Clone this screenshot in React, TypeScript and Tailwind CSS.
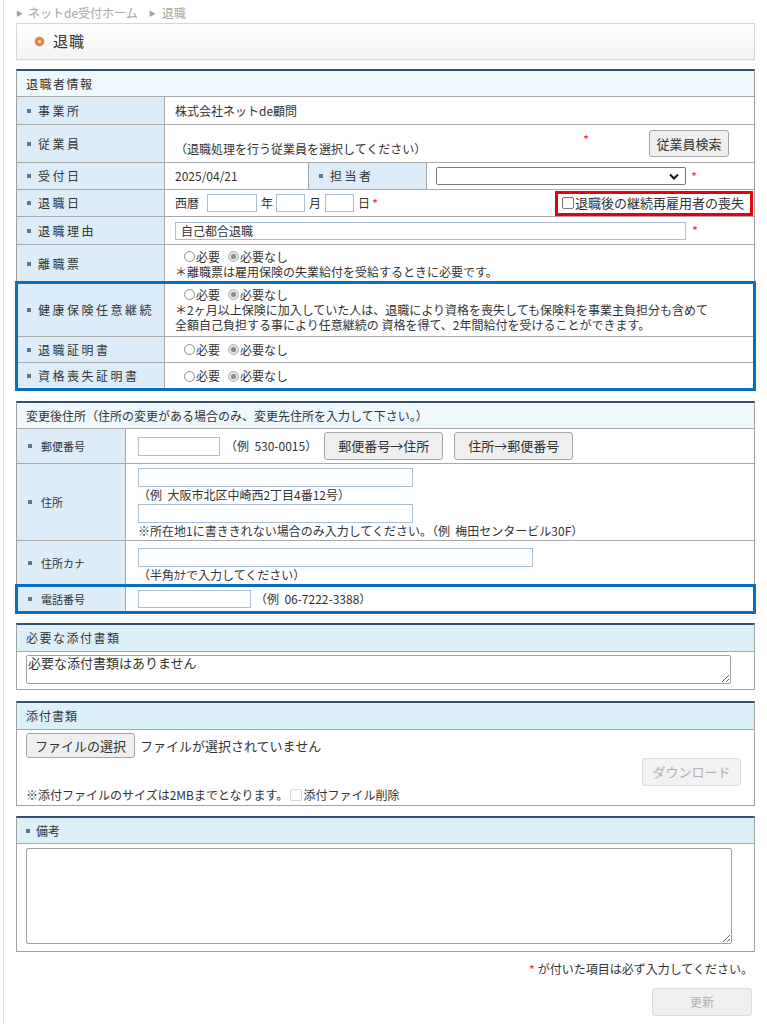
import React from "react";

const FONT = "font-['Noto_Sans_CJK_JP','Noto_Sans',sans-serif]";

function Bullet() {
  return <span className="inline-block w-[4px] h-[4px] shrink-0 bg-[#5f7489]" />;
}

function Req({ className = "" }: { className?: string }) {
  return <span className={`text-[#e8383d] text-[13px] leading-none ${className}`}>*</span>;
}

function Radio({ checked, label }: { checked?: boolean; label: string }) {
  return (
    <span className="inline-flex items-center">
      <span
        className={
          checked
            ? "w-[11px] h-[11px] rounded-full border border-[#b3b3b3] bg-[#e2e2e2] flex items-center justify-center"
            : "w-[11px] h-[11px] rounded-full border border-[#8c8c8c] bg-white"
        }
      >
        {checked && <span className="w-[5px] h-[5px] rounded-full bg-[#8a8a8a]" />}
      </span>
      <span className="ml-[1px]">{label}</span>
    </span>
  );
}

function RadioPair() {
  return (
    <div className="flex items-center gap-[8px] pl-[9px]">
      <Radio label="必要" />
      <Radio checked label="必要なし" />
    </div>
  );
}

function Box({ w, h = "h-[19px]", value }: { w: string; h?: string; value?: string }) {
  return (
    <input
      readOnly
      defaultValue={value}
      className={`${w} ${h} border border-[#a9bfd6] bg-white px-[5px] text-[12px] text-[#333] outline-none`}
    />
  );
}

function Btn({ children, className = "" }: { children: React.ReactNode; className?: string }) {
  return (
    <button
      type="button"
      className={`flex items-center justify-center rounded-[3px] border border-[#a6a6a6] bg-[#efefef] text-[13px] text-[#333] ${className}`}
    >
      {children}
    </button>
  );
}

function Check({ light }: { light?: boolean }) {
  return (
    <span
      className={
        light
          ? "inline-block w-[12px] h-[12px] rounded-[2px] border border-[#d6d6d6] bg-white"
          : "inline-block w-[12px] h-[12px] rounded-[2px] border border-[#767676] bg-white"
      }
    />
  );
}

function L1({ children, extra = "" }: { children: React.ReactNode; extra?: string }) {
  return (
    <div className={`flex items-center gap-[7px] pl-[10px] bg-[#dcedf9] border-r border-[#a8a8a8] text-[12px] tracking-[2.5px] ${extra}`}>
      <Bullet />
      <span>{children}</span>
    </div>
  );
}

function L2({ children }: { children: React.ReactNode }) {
  return (
    <div className="flex items-center gap-[9px] pl-[11px] bg-[#dcedf9] border-r border-[#a8a8a8] text-[11px]">
      <Bullet />
      <span>{children}</span>
    </div>
  );
}

function SectionHead({ children, tracking = "", tall }: { children: React.ReactNode; tracking?: string; tall?: boolean }) {
  return (
    <div
      className={`${tall ? "h-[27px]" : "h-[26px]"} flex items-center pl-[9px] border-b border-[#a8a8a8] text-[12px] ${tracking}`}
    >
      {children}
    </div>
  );
}

export default function App() {
  return (
    <div className={`${FONT} bg-white text-[#333] min-h-[1024px]`}>
      <div className="ml-[3px] border-l border-[#e3e3e3] min-h-[1024px] px-[12px]">
        {/* breadcrumb */}
        <div className="h-[23px] pt-[3px] flex items-center text-[12px] text-[#a5a5a5]">
          <span className="text-[7px] mr-[5px]">▶</span>
          <span>ネットde受付ホーム</span>
          <span className="text-[7px] ml-[11px] mr-[6px]">▶</span>
          <span>退職</span>
        </div>

        {/* title */}
        <div className="h-[37px] border border-[#d6d6d6] bg-gradient-to-b from-white to-[#f3f3f3] flex items-center pl-[17px] shadow-[0_1px_1px_rgba(0,0,0,0.04)]">
          <svg width="11" height="11" viewBox="0 0 11 11" className="shrink-0">
            <circle cx="5.5" cy="5.5" r="4.8" fill="#e9843a" />
            <circle cx="5.5" cy="5.5" r="1.6" fill="#fde3c9" />
          </svg>
          <span className="ml-[8px] text-[15px] tracking-[1px] text-[#333]">退職</span>
        </div>

        {/* 退職者情報 */}
        <div className="mt-[9px] border border-[#a0a0a0] border-t-2 border-t-[#33506f]">
          <SectionHead tracking="tracking-[1.5px] bg-[#eef8fd]">退職者情報</SectionHead>

          <div className="grid grid-cols-[148px_1fr] h-[28px] border-b border-[#a8a8a8] text-[12px]">
            <L1>事業所</L1>
            <div className="flex items-center pl-[10px]">株式会社ネットde顧問</div>
          </div>

          <div className="grid grid-cols-[148px_1fr] h-[38px] border-b border-[#a8a8a8] text-[12px]">
            <L1>従業員</L1>
            <div className="flex items-center pl-[10px] pr-[25px]">
              <span className="self-end mb-[4px]">（退職処理を行う従業員を選択してください）</span>
              <Req className="ml-auto mr-[60px] self-start mt-[8px]" />
              <Btn className="w-[80px] h-[27px]">従業員検索</Btn>
            </div>
          </div>

          <div className="grid grid-cols-[148px_144px_118px_1fr] h-[27px] border-b border-[#a8a8a8] text-[12px]">
            <L1>受付日</L1>
            <div className="flex items-center pl-[10px] border-r border-[#a8a8a8]">2025/04/21</div>
            <L1>担当者</L1>
            <div className="flex items-center pl-[9px]">
              <div className="w-[250px] h-[18px] rounded-[2px] border border-[#767676] bg-white flex items-center justify-end pr-[6px]">
                <svg width="10" height="7" viewBox="0 0 10 7">
                  <path d="M1 1.5 5 5.5 9 1.5" fill="none" stroke="#111" strokeWidth="2" />
                </svg>
              </div>
              <Req className="ml-[5px]" />
            </div>
          </div>

          <div className="grid grid-cols-[148px_1fr] h-[27px] border-b border-[#a8a8a8] text-[12px]">
            <L1>退職日</L1>
            <div className="flex items-center pl-[10px]">
              <span>西暦</span>
              <span className="ml-[8px]"><Box w="w-[50px]" h="h-[18px]" /></span>
              <span className="ml-[4px]">年</span>
              <span className="ml-[3px]"><Box w="w-[29px]" h="h-[18px]" /></span>
              <span className="ml-[4px]">月</span>
              <span className="ml-[4px]"><Box w="w-[29px]" h="h-[18px]" /></span>
              <span className="ml-[4px]">日</span>
              <Req className="ml-[2px]" />
              <div className="ml-auto mr-[1px] w-[198px] h-[25px] border-[3px] border-[#e50012] flex items-center pl-[4px] text-[13px] whitespace-nowrap">
                <Check />
                <span className="ml-[1px]">退職後の継続再雇用者の喪失</span>
              </div>
            </div>
          </div>

          <div className="grid grid-cols-[148px_1fr] h-[28px] border-b border-[#a8a8a8] text-[12px]">
            <L1>退職理由</L1>
            <div className="flex items-center pl-[10px]">
              <Box w="w-[511px]" h="h-[18px]" value="自己都合退職" />
              <Req className="ml-[6px]" />
            </div>
          </div>

          <div className="grid grid-cols-[148px_1fr] h-[38px] border-b border-[#a8a8a8] text-[12px]">
            <L1>離職票</L1>
            <div className="flex flex-col justify-center pl-[10px] leading-[15px]">
              <RadioPair />
              <div className="whitespace-nowrap">＊離職票は雇用保険の失業給付を受給するときに必要です。</div>
            </div>
          </div>

          <div className="outline-3 outline-solid outline-[#0b6fc0] -outline-offset-1 relative">
            <div className="grid grid-cols-[148px_1fr] h-[54px] border-b border-[#a8a8a8] text-[12px]">
              <L1>健康保険任意継続</L1>
              <div className="flex flex-col justify-center pl-[10px] leading-[15px] whitespace-nowrap">
                <RadioPair />
                <div>＊2ヶ月以上保険に加入していた人は、退職により資格を喪失しても保険料を事業主負担分も含めて</div>
                <div>全額自己負担する事により任意継続の 資格を得て、2年間給付を受けることができます。</div>
              </div>
            </div>
            <div className="grid grid-cols-[148px_1fr] h-[26px] border-b border-[#a8a8a8] text-[12px]">
              <L1>退職証明書</L1>
              <div className="flex items-center pl-[10px]">
                <RadioPair />
              </div>
            </div>
            <div className="grid grid-cols-[148px_1fr] h-[26px] text-[12px]">
              <L1>資格喪失証明書</L1>
              <div className="flex items-center pl-[10px]">
                <RadioPair />
              </div>
            </div>
          </div>
        </div>

        {/* 変更後住所 */}
        <div className="mt-[11px] border border-[#a0a0a0] border-t-2 border-t-[#33506f]">
          <SectionHead tracking="bg-[#eef8fd]">変更後住所（住所の変更がある場合のみ、変更先住所を入力して下さい。）</SectionHead>

          <div className="grid grid-cols-[109px_1fr] h-[35px] border-b border-[#a8a8a8] text-[12px]">
            <L2>郵便番号</L2>
            <div className="flex items-center pl-[12px]">
              <Box w="w-[82px]" />
              <span className="ml-[5px]">（例&nbsp;&nbsp;530-0015）</span>
              <Btn className="ml-[7px] w-[119px] h-[28px]">郵便番号→住所</Btn>
              <Btn className="ml-[11px] w-[119px] h-[28px]">住所→郵便番号</Btn>
            </div>
          </div>

          <div className="grid grid-cols-[109px_1fr] h-[77px] border-b border-[#a8a8a8] text-[12px]">
            <L2>住所</L2>
            <div className="flex flex-col items-start pl-[12px] pt-[4px] leading-[16px]">
              <Box w="w-[275px]" />
              <span>（例&nbsp;&nbsp;大阪市北区中崎西2丁目4番12号）</span>
              <span className="mt-[1px]"><Box w="w-[275px]" /></span>
              <span className="whitespace-nowrap">※所在地1に書ききれない場合のみ入力してください。（例&nbsp;&nbsp;梅田センタービル30F）</span>
            </div>
          </div>

          <div className="grid grid-cols-[109px_1fr] h-[45px] border-b border-[#a8a8a8] text-[12px]">
            <L2>住所カナ</L2>
            <div className="flex flex-col items-start pl-[12px] pt-[7px] leading-[16px]">
              <Box w="w-[395px]" />
              <span>（半角ｶﾅで入力してください）</span>
            </div>
          </div>

          <div className="outline-3 outline-solid outline-[#0b6fc0] -outline-offset-1 relative">
            <div className="grid grid-cols-[109px_1fr] h-[26px] text-[12px]">
              <L2>電話番号</L2>
              <div className="flex items-center pl-[12px]">
                <Box w="w-[113px]" h="h-[18px]" />
                <span className="ml-[4px]">（例&nbsp;&nbsp;06-7222-3388）</span>
              </div>
            </div>
          </div>
        </div>

        {/* 必要な添付書類 */}
        <div className="mt-[10px] border border-[#a0a0a0] border-t-2 border-t-[#33506f]">
          <SectionHead tall tracking="tracking-[1.5px] bg-[#dcf0fa]">必要な添付書類</SectionHead>
          <div className="h-[37px] pl-[9px] pt-[3px]">
            <textarea
              readOnly
              defaultValue="必要な添付書類はありません"
              className="block w-[705px] h-[29px] rounded-[2px] border border-[#a0a0a0] px-[1px] py-0 text-[13px] leading-[14px] text-[#333] outline-none"
            />
          </div>
        </div>

        {/* 添付書類 */}
        <div className="mt-[11px] border border-[#a0a0a0] border-t-2 border-t-[#33506f]">
          <SectionHead tall tracking="tracking-[1px] bg-[#dcf0fa]">添付書類</SectionHead>
          <div className="h-[75px] pl-[9px] pr-[13px] pt-[3px] flex flex-col">
            <div className="flex items-center text-[13px]">
              <Btn className="w-[109px] h-[25px] rounded-[2px] border-[#8f8f8f]">ファイルの選択</Btn>
              <span className="ml-[5px]">ファイルが選択されていません</span>
            </div>
            <div className="flex justify-end">
              <button
                type="button"
                className="w-[99px] h-[28px] rounded-[3px] border border-[#dcdcdc] bg-[#f2f2f2] text-[13px] text-[#b0b0b0]"
              >
                ダウンロード
              </button>
            </div>
            <div className="mt-[2px] flex items-center text-[12px] leading-[14px]">
              <span>※添付ファイルのサイズは2MBまでとなります。</span>
              <span className="ml-[2px] mr-[1px] flex"><Check light /></span>
              <span>添付ファイル削除</span>
            </div>
          </div>
        </div>

        {/* 備考 */}
        <div className="mt-[10px] border border-[#a0a0a0] border-t-2 border-t-[#33506f]">
          <div className="h-[26px] flex items-center gap-[6px] pl-[9px] border-b border-[#a8a8a8] bg-[#dcf0fa] text-[12px]">
            <Bullet />
            <span>備考</span>
          </div>
          <div className="h-[107px] pl-[9px] pt-[4px]">
            <textarea
              readOnly
              className="block w-[706px] h-[96px] rounded-[2px] border border-[#a0a0a0] text-[13px] outline-none"
            />
          </div>
        </div>

        {/* footer */}
        <div className="mt-[10px] flex justify-end items-center text-[12px] leading-[14px] pr-[2px]">
          <Req className="mr-[3px]" />
          <span>が付いた項目は必ず入力してください。</span>
        </div>
        <div className="mt-[12px] flex justify-end pr-[3px]">
          <button
            type="button"
            className="w-[100px] h-[28px] rounded-[3px] border border-[#dcdcdc] bg-[#f0f0f0] text-[12px] text-[#b0b0b0]"
          >
            更新
          </button>
        </div>
      </div>
    </div>
  );
}
